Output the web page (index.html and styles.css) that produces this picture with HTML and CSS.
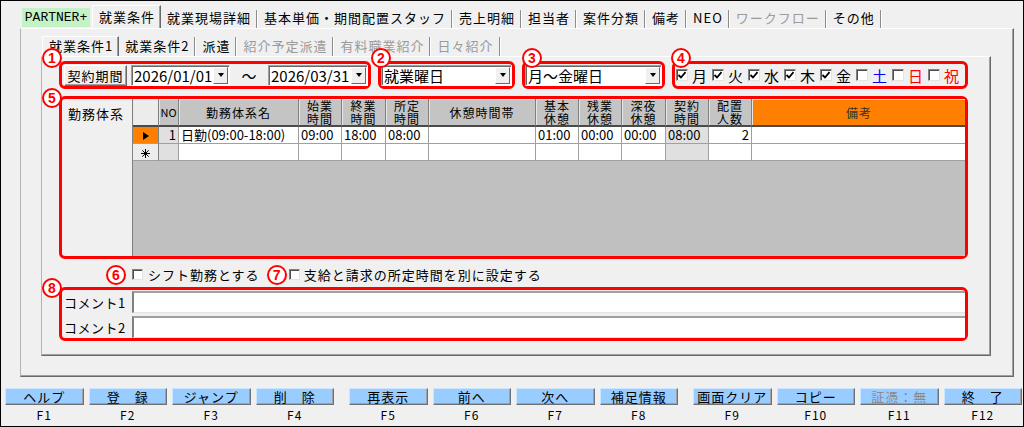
FILE: index.html
```html
<!DOCTYPE html>
<html lang="ja">
<head>
  <meta charset="UTF-8">
  <meta name="viewport" content="width=device-width, initial-scale=1.0">
  <title>就業条件</title>
  <link rel="stylesheet" href="styles.css">
</head>
<body>
<div class="screen">

  <div class="tabbar">
    <span class="partner">PARTNER+</span>
    <span class="tab active">就業条件</span>
    <span class="tab">就業現場詳細</span>
    <span class="tab">基本単価・期間配置スタッフ</span>
    <span class="tab">売上明細</span>
    <span class="tab">担当者</span>
    <span class="tab">案件分類</span>
    <span class="tab">備考</span>
    <span class="tab">NEO</span>
    <span class="tab off">ワークフロー</span>
    <span class="tab">その他</span>
  </div>

  <div class="page">
    <div class="subtabs">
      <span class="tab active">就業条件1</span>
      <span class="tab">就業条件2</span>
      <span class="tab">派遣</span>
      <span class="tab off">紹介予定派遣</span>
      <span class="tab off">有料職業紹介</span>
      <span class="tab off">日々紹介</span>
    </div>

    <div class="panel">
      <!-- contract period / day pattern -->
      <div class="row-top">
        <div class="mark period">
          <span class="badge b1">1</span>
          <span class="btn">契約期間</span>
          <div class="combo date"><span>2026/01/01</span><span class="drop"></span></div>
          <span class="tilde">～</span>
          <div class="combo date wide"><span>2026/03/31</span><span class="drop"></span></div>
        </div>
        <div class="mark kind">
          <span class="badge b2">2</span>
          <div class="combo"><span>就業曜日</span><span class="drop"></span></div>
        </div>
        <div class="mark pattern">
          <span class="badge b3">3</span>
          <div class="combo"><span>月～金曜日</span><span class="drop"></span></div>
        </div>
        <div class="mark days">
          <span class="badge b4">4</span>
          <label class="day"><span class="cb checked"><svg viewBox="0 0 10 10"><polyline points="1.5,5 4,7.5 8.5,2.2"/></svg></span>月</label>
          <label class="day"><span class="cb checked"><svg viewBox="0 0 10 10"><polyline points="1.5,5 4,7.5 8.5,2.2"/></svg></span>火</label>
          <label class="day"><span class="cb checked"><svg viewBox="0 0 10 10"><polyline points="1.5,5 4,7.5 8.5,2.2"/></svg></span>水</label>
          <label class="day"><span class="cb checked"><svg viewBox="0 0 10 10"><polyline points="1.5,5 4,7.5 8.5,2.2"/></svg></span>木</label>
          <label class="day"><span class="cb checked"><svg viewBox="0 0 10 10"><polyline points="1.5,5 4,7.5 8.5,2.2"/></svg></span>金</label>
          <label class="day sat"><span class="cb"></span>土</label>
          <label class="day sun"><span class="cb"></span>日</label>
          <label class="day sun"><span class="cb"></span>祝</label>
        </div>
      </div>

      <!-- work pattern grid -->
      <div class="mark shifts">
        <span class="badge b5">5</span>
        <div class="side-label">勤務体系</div>
        <div class="grid-wrap">
          <table class="grid">
            <colgroup>
              <col style="width:26px"><col style="width:20px"><col style="width:120px">
              <col style="width:43px"><col style="width:44px"><col style="width:43px">
              <col style="width:107px"><col style="width:43px"><col style="width:43px">
              <col style="width:44px"><col style="width:43px"><col style="width:43px">
              <col style="width:214px">
            </colgroup>
            <thead>
              <tr>
                <th class="corner"></th>
                <th class="narrow">NO</th>
                <th>勤務体系名</th>
                <th>始業<br>時間</th>
                <th>終業<br>時間</th>
                <th>所定<br>時間</th>
                <th>休憩時間帯</th>
                <th>基本<br>休憩</th>
                <th>残業<br>休憩</th>
                <th>深夜<br>休憩</th>
                <th>契約<br>時間</th>
                <th>配置<br>人数</th>
                <th class="note">備考</th>
              </tr>
            </thead>
            <tbody>
              <tr>
                <td class="rh current"><span class="arrow"></span></td>
                <td class="num shade">1</td>
                <td>日勤(09:00-18:00)</td>
                <td>09:00</td>
                <td>18:00</td>
                <td>08:00</td>
                <td></td>
                <td>01:00</td>
                <td>00:00</td>
                <td>00:00</td>
                <td class="shade">08:00</td>
                <td class="num">2</td>
                <td></td>
              </tr>
              <tr>
                <td class="rh"><svg class="star" viewBox="0 0 9 9"><path d="M4.5 0V9M0 4.5H9M1.3 1.3L7.7 7.7M7.7 1.3L1.3 7.7"/></svg></td>
                <td class="shade"></td>
                <td></td><td></td><td></td><td></td><td></td>
                <td></td><td></td><td></td>
                <td class="shade"></td>
                <td></td><td></td>
              </tr>
            </tbody>
          </table>
        </div>
      </div>

      <!-- options -->
      <div class="opts">
        <span class="badge">6</span>
        <span class="cb small"></span>
        <span class="opt-label">シフト勤務とする</span>
        <span class="badge second">7</span>
        <span class="cb small tight"></span>
        <span class="opt-label">支給と請求の所定時間を別に設定する</span>
      </div>

      <!-- comments -->
      <div class="mark comments">
        <span class="badge b8">8</span>
        <span class="c-label">コメント1</span>
        <div class="field"></div>
        <span class="c-label">コメント2</span>
        <div class="field"></div>
      </div>
    </div>
  </div>

  <div class="fkeys">
    <div class="group">
      <div class="key"><span class="kbtn">ヘルプ</span><span class="kname">F1</span></div>
      <div class="key"><span class="kbtn">登　録</span><span class="kname">F2</span></div>
      <div class="key"><span class="kbtn">ジャンプ</span><span class="kname">F3</span></div>
      <div class="key"><span class="kbtn">削　除</span><span class="kname">F4</span></div>
    </div>
    <div class="group">
      <div class="key"><span class="kbtn">再表示</span><span class="kname">F5</span></div>
      <div class="key"><span class="kbtn">前へ</span><span class="kname">F6</span></div>
      <div class="key"><span class="kbtn">次へ</span><span class="kname">F7</span></div>
      <div class="key"><span class="kbtn">補足情報</span><span class="kname">F8</span></div>
    </div>
    <div class="group">
      <div class="key"><span class="kbtn">画面クリア</span><span class="kname">F9</span></div>
      <div class="key"><span class="kbtn">コピー</span><span class="kname">F10</span></div>
      <div class="key"><span class="kbtn off">証憑：無</span><span class="kname">F11</span></div>
      <div class="key"><span class="kbtn">終　了</span><span class="kname">F12</span></div>
    </div>
  </div>

</div>
</body>
</html>
```

FILE: styles.css
```css
* { box-sizing: border-box; }

body { margin: 0; }

.screen {
  width: 1024px;
  height: 427px;
  border: 1px solid #000;
  background: #f0f0f0;
  font-family: "Noto Sans CJK JP", sans-serif;
  font-size: 13px;
  color: #000;
  overflow: hidden; }

/* ---------- tabs ---------- */
.tabbar {
  display: flex;
  align-items: flex-end;
  height: 27px;
  padding-left: 21px; }

.partner {
  width: 68px;
  height: 19px;
  margin: 0 2px 1px 0;
  background: #c4f2c4;
  font-family: "Liberation Mono", monospace;
  font-size: 13px;
  line-height: 19px;
  text-align: center; }

.tab {
  height: 18px;
  line-height: 16px;
  padding: 0 5px 0 6px;
  margin-right: 1px;
  letter-spacing: 1px;
  white-space: nowrap;
  border-right: 1px solid #8c8c8c;
  box-shadow: 1px 0 0 #fff; }

.tab.active {
  height: 23px;
  line-height: 21px;
  margin-right: 0;
  border-top: 1px solid #fff;
  border-left: 1px solid #fff;
  border-right: 1px solid #696969;
  box-shadow: inset -1px 0 0 #a0a0a0; }

.tab.off { color: #9a9a9a; }

.page {
  margin-left: 19px;
  width: 994px;
  height: 349px;
  padding: 7px 21px 0 20px;
  border-top: 1px solid #fff;
  border-left: 1px solid #b4b4b4;
  border-right: 1px solid #696969;
  border-bottom: 1px solid #696969;
  box-shadow: inset -1px -1px 0 #a0a0a0; }

.subtabs {
  display: flex;
  align-items: flex-end;
  height: 20px;
  margin-left: 1px; }

.subtabs .tab { height: 19px; line-height: 17px; }
.subtabs .tab.active { height: 20px; line-height: 18px; }

.panel {
  width: 950px;
  height: 300px;
  border-top: 1px solid #fff;
  border-left: 1px solid #b4b4b4;
  border-right: 1px solid #696969;
  border-bottom: 1px solid #696969;
  box-shadow: inset -1px -1px 0 #a0a0a0;
  padding-left: 17px; }

/* ---------- red annotation boxes ---------- */
.mark {
  position: relative;
  border: 3px solid #f00;
  border-radius: 6px; }

.badge {
  display: inline-flex;
  align-items: center;
  justify-content: center;
  width: 20px;
  height: 20px;
  border: 2px solid #f00;
  border-radius: 50%;
  background: #fff;
  color: #f00;
  font-family: "Liberation Sans", sans-serif;
  font-weight: bold;
  font-size: 14px;
  line-height: 1; }

.mark .badge { position: absolute; z-index: 2; }
.b1 { left: -20px; top: -16px; }
.b2 { left: -10px; top: -16px; }
.b3 { left: -3px; top: -16px; }
.b4 { left: -4px; top: -16px; }
.b5 { left: -20px; top: -11px; }
.b8 { left: -20px; top: -12px; }

/* ---------- top row ---------- */
.row-top {
  display: flex;
  gap: 7px;
  margin-top: 4px; }

.row-top .mark {
  height: 28px;
  display: flex;
  align-items: center; }

.period { width: 312px; padding-left: 2px; }
.kind { width: 137px; }
.pattern { width: 143px; }
.days { width: 296px; padding-left: 1px; gap: 5px; }

.btn {
  width: 63px;
  height: 21px;
  margin-right: 4px;
  line-height: 19px;
  text-align: center;
  letter-spacing: 1px;
  border: 1px solid;
  border-color: #fff #696969 #696969 #fff;
  box-shadow: inset -1px -1px 0 #a0a0a0; }

.combo {
  display: flex;
  justify-content: space-between;
  align-items: center;
  width: 100%;
  height: 21px;
  padding-left: 2px;
  background: #fff;
  border: 1px solid;
  border-color: #a0a0a0 #fff #fff #a0a0a0;
  box-shadow: inset 1px 1px 0 #696969;
  font-size: 15px;
  line-height: 19px; }

.combo.date { width: 99px; }
.combo.date.wide { width: 100px; }

.drop {
  display: flex;
  align-items: center;
  justify-content: center;
  width: 15px;
  height: 17px;
  margin-right: 1px;
  background: #f0f0f0;
  border: 1px solid;
  border-color: #fff #696969 #696969 #fff; }

.drop::after {
  content: "";
  border-left: 3.5px solid transparent;
  border-right: 3.5px solid transparent;
  border-top: 4px solid #000; }

.tilde {
  width: 38px;
  text-align: center;
  font-size: 15px; }

.day {
  display: flex;
  align-items: center;
  gap: 4px;
  font-size: 15px; }

.day.sat { color: #0000ff; }
.day.sun { color: #ff0000; }

.cb {
  display: inline-block;
  width: 12px;
  height: 12px;
  background: #fff;
  border: 1px solid;
  border-color: #808080 #e3e3e3 #e3e3e3 #808080;
  box-shadow: inset 1px 1px 0 #505050; }

.cb svg {
  display: block;
  width: 10px;
  height: 10px; }

.cb polyline {
  fill: none;
  stroke: #000;
  stroke-width: 1.8; }

/* ---------- shift grid ---------- */
.shifts {
  display: flex;
  width: 909px;
  height: 163px;
  margin-top: 7px; }

.side-label {
  width: 70px;
  padding: 5px 0 0 6px;
  letter-spacing: 1px; }

.grid-wrap {
  flex: 1;
  background: #c0c0c0;
  border-left: 1px solid #808080;
  overflow: hidden; }

.grid {
  border-collapse: separate;
  border-spacing: 0;
  table-layout: fixed;
  width: 833px; }

.grid th {
  height: 28px;
  padding: 0;
  background: #c4c4c4;
  border-right: 1px solid #808080;
  border-bottom: 2px solid #4a4a4a;
  box-shadow: inset 1px 1px 0 #e6e6e6;
  font-weight: normal;
  font-size: 12px;
  line-height: 13px;
  letter-spacing: 1px;
  text-align: center; }

.grid th.corner { background: #ececec; }
.grid th.narrow { font-size: 11px; letter-spacing: 0; }
.grid th.note { background: #ff8000; color: #333; border-right: none; }

.grid td {
  height: 17px;
  padding: 0 2px;
  background: #fff;
  border-right: 1px solid #a0a0a0;
  border-bottom: 1px solid #a0a0a0;
  line-height: 16px;
  white-space: nowrap;
  overflow: hidden; }

.grid td.num { text-align: right; }
.grid td.shade { background: #e0e0e0; }

.grid td.rh {
  background: #ececec;
  border-right: 1px solid #808080;
  text-align: center; }

.grid td.current { background: #ff8000; }

.arrow {
  display: inline-block;
  vertical-align: middle;
  border-left: 6px solid #000;
  border-top: 4.5px solid transparent;
  border-bottom: 4.5px solid transparent; }

.star {
  display: inline-block;
  vertical-align: middle;
  width: 9px;
  height: 9px; }

.star path { stroke: #000; stroke-width: 1; }

/* ---------- options ---------- */
.opts {
  display: flex;
  align-items: center;
  height: 28px;
  padding: 3px 0 0 47px; }

.opts .cb.small {
  width: 11px;
  height: 11px;
  margin: 0 5px 0 6px; }

.opts .cb.tight { margin: 0 4px 0 2px; }

.opts .badge.second { margin-left: 7px; }

.opt-label { letter-spacing: 1px; }

/* ---------- comments ---------- */
.comments {
  display: grid;
  grid-template-columns: 70px 1fr;
  grid-auto-rows: 22px;
  row-gap: 3px;
  align-items: center;
  width: 909px;
  height: 54px;
  padding-top: 1px; }

.c-label {
  padding-left: 2px;
  letter-spacing: 0.5px; }

.field {
  height: 22px;
  background: #fff;
  border-style: solid;
  border-width: 2px 0 1px 2px;
  border-color: #a0a0a0 #fff #e3e3e3 #808080; }

/* ---------- function keys ---------- */
.fkeys {
  display: flex;
  gap: 15px;
  margin-top: 11px;
  padding-left: 4px; }

.group { display: flex; gap: 5px; }

.key {
  display: flex;
  flex-direction: column;
  align-items: center;
  width: 78.5px; }

.kbtn {
  width: 100%;
  height: 17px;
  background: #99ccff;
  border: 1px solid;
  border-color: #cde6ff #707070 #707070 #cde6ff;
  box-shadow: inset -1px -1px 0 #a0a0a0;
  font-size: 13px;
  line-height: 15px;
  text-align: center;
  letter-spacing: 1px; }

.kbtn.off { color: #8a8a8a; }

.kname {
  margin-top: 2px;
  font-size: 12px;
  line-height: 16px;
  letter-spacing: 1px; }
```
